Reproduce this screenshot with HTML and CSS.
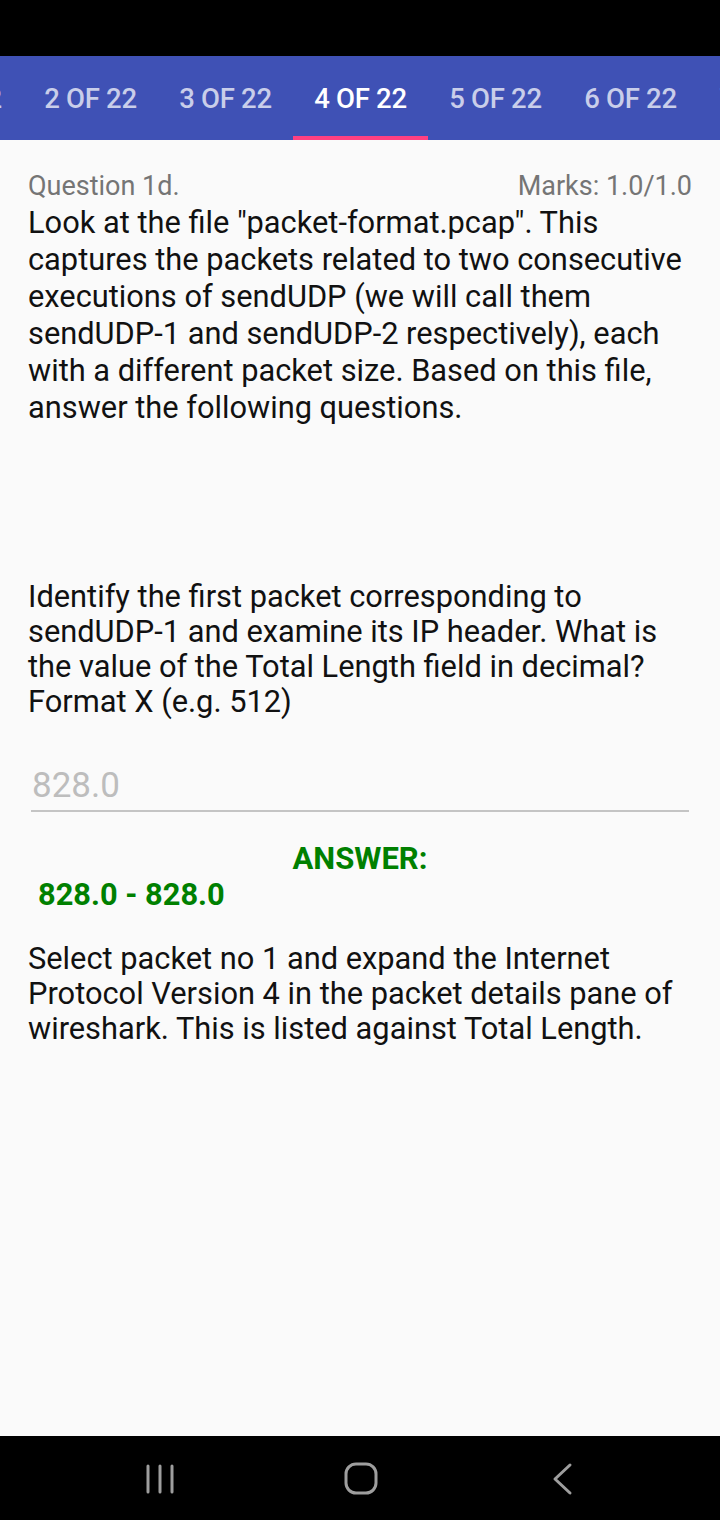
FILE: index.html
```html
<!DOCTYPE html>
<html>
<head>
<meta charset="utf-8">
<link rel="stylesheet" href="styles.css">
</head>
<body>
<div class="status"></div>
<div class="tabs">
  <div class="tab">1 OF 22</div>
  <div class="tab">2 OF 22</div>
  <div class="tab">3 OF 22</div>
  <div class="tab active">4 OF 22</div>
  <div class="tab">5 OF 22</div>
  <div class="tab">6 OF 22</div>
  <div class="tab">7 OF 22</div>
</div>
<main class="content">
  <div class="qhead">
    <span class="qnum">Question 1d.</span>
    <span class="marks">Marks: 1.0/1.0</span>
  </div>
  <p class="intro">Look at the file "packet-format.pcap". This captures the packets related to two consecutive executions of sendUDP (we will call them sendUDP-1 and sendUDP-2 respectively), each with a different packet size. Based on this file, answer the following questions.</p>
  <p class="question">Identify the first packet corresponding to sendUDP-1 and examine its IP header. What is the value of the Total Length field in decimal? Format X (e.g. 512)</p>
  <div class="field">828.0</div>
  <div class="answer-label">ANSWER:</div>
  <div class="answer-value">828.0 - 828.0</div>
  <p class="explain">Select packet no 1 and expand the Internet Protocol Version 4 in the packet details pane of wireshark. This is listed against Total Length.</p>
</main>
<nav class="navbar">
  <svg class="nav-icon" width="40" height="40" viewBox="0 0 40 40"><g stroke="#9e9e9e" stroke-width="3" stroke-linecap="round"><line x1="8" y1="7" x2="8" y2="33"/><line x1="20" y1="7" x2="20" y2="33"/><line x1="32" y1="7" x2="32" y2="33"/></g></svg>
  <svg class="nav-icon" width="40" height="40" viewBox="0 0 40 40"><rect x="5" y="5" width="30" height="29" rx="10" fill="none" stroke="#9e9e9e" stroke-width="3"/></svg>
  <svg class="nav-icon" width="40" height="40" viewBox="0 0 40 40"><polyline points="28,6 13,20 28,34" fill="none" stroke="#9e9e9e" stroke-width="3" stroke-linecap="round" stroke-linejoin="round"/></svg>
</nav>
</body>
</html>
```
FILE: styles.css
```css
* { box-sizing: border-box; }
html, body { margin: 0; padding: 0; }
body {
  width: 720px;
  height: 1520px;
  background: #fafafa;
  font-family: Roboto, "Noto Sans", sans-serif;
  display: flex;
  flex-direction: column;
  overflow: hidden;
}
.status { height: 56px; background: #000; flex: none; }
.tabs {
  height: 84px;
  background: #3f51b5;
  display: flex;
  flex: none;
  margin-left: -112px;
  overflow: hidden;
}
.tab {
  flex: none;
  width: 135px;
  display: flex;
  align-items: center;
  justify-content: center;
  font-size: 27.5px;
  font-weight: 500;
  color: rgba(255,255,255,0.72);
  border-bottom: 4px solid transparent;
  padding-top: 4px;
  letter-spacing: -0.3px;
  white-space: nowrap;
}
.tab.active { color: #fff; border-bottom-color: #ff4081; }
.content {
  flex: 1;
  padding: 29px 28px 0 28px;
}
.qhead {
  display: flex;
  justify-content: space-between;
  font-size: 27px;
  color: #757575;
  line-height: 35px;
}
.intro, .question, .explain {
  margin: 0;
  font-size: 30.8px;
  color: #111;
}
.intro { line-height: 37px; }
.question { line-height: 35px; margin-top: 153px; }
.field {
  margin: 44px 3px 0 3px;
  font-size: 35px;
  color: #bdbdbd;
  line-height: 40px;
  padding: 3px 0 4px 1px;
  border-bottom: 2px solid #c4c4c4;
}
.answer-label {
  margin-top: 29px;
  text-align: center;
  font-size: 31px;
  font-weight: 700;
  color: #008000;
  line-height: 36px;
}
.answer-value {
  font-size: 30.8px;
  font-weight: 700;
  color: #008000;
  line-height: 36px;
  margin-left: 10px;
}
.explain { line-height: 35px; margin-top: 28px; }
.navbar {
  height: 84px;
  background: #000;
  flex: none;
  display: flex;
  align-items: center;
  gap: 161px;
  padding: 2px 0 0 140px;
}
.nav-icon { display: block; }
```
